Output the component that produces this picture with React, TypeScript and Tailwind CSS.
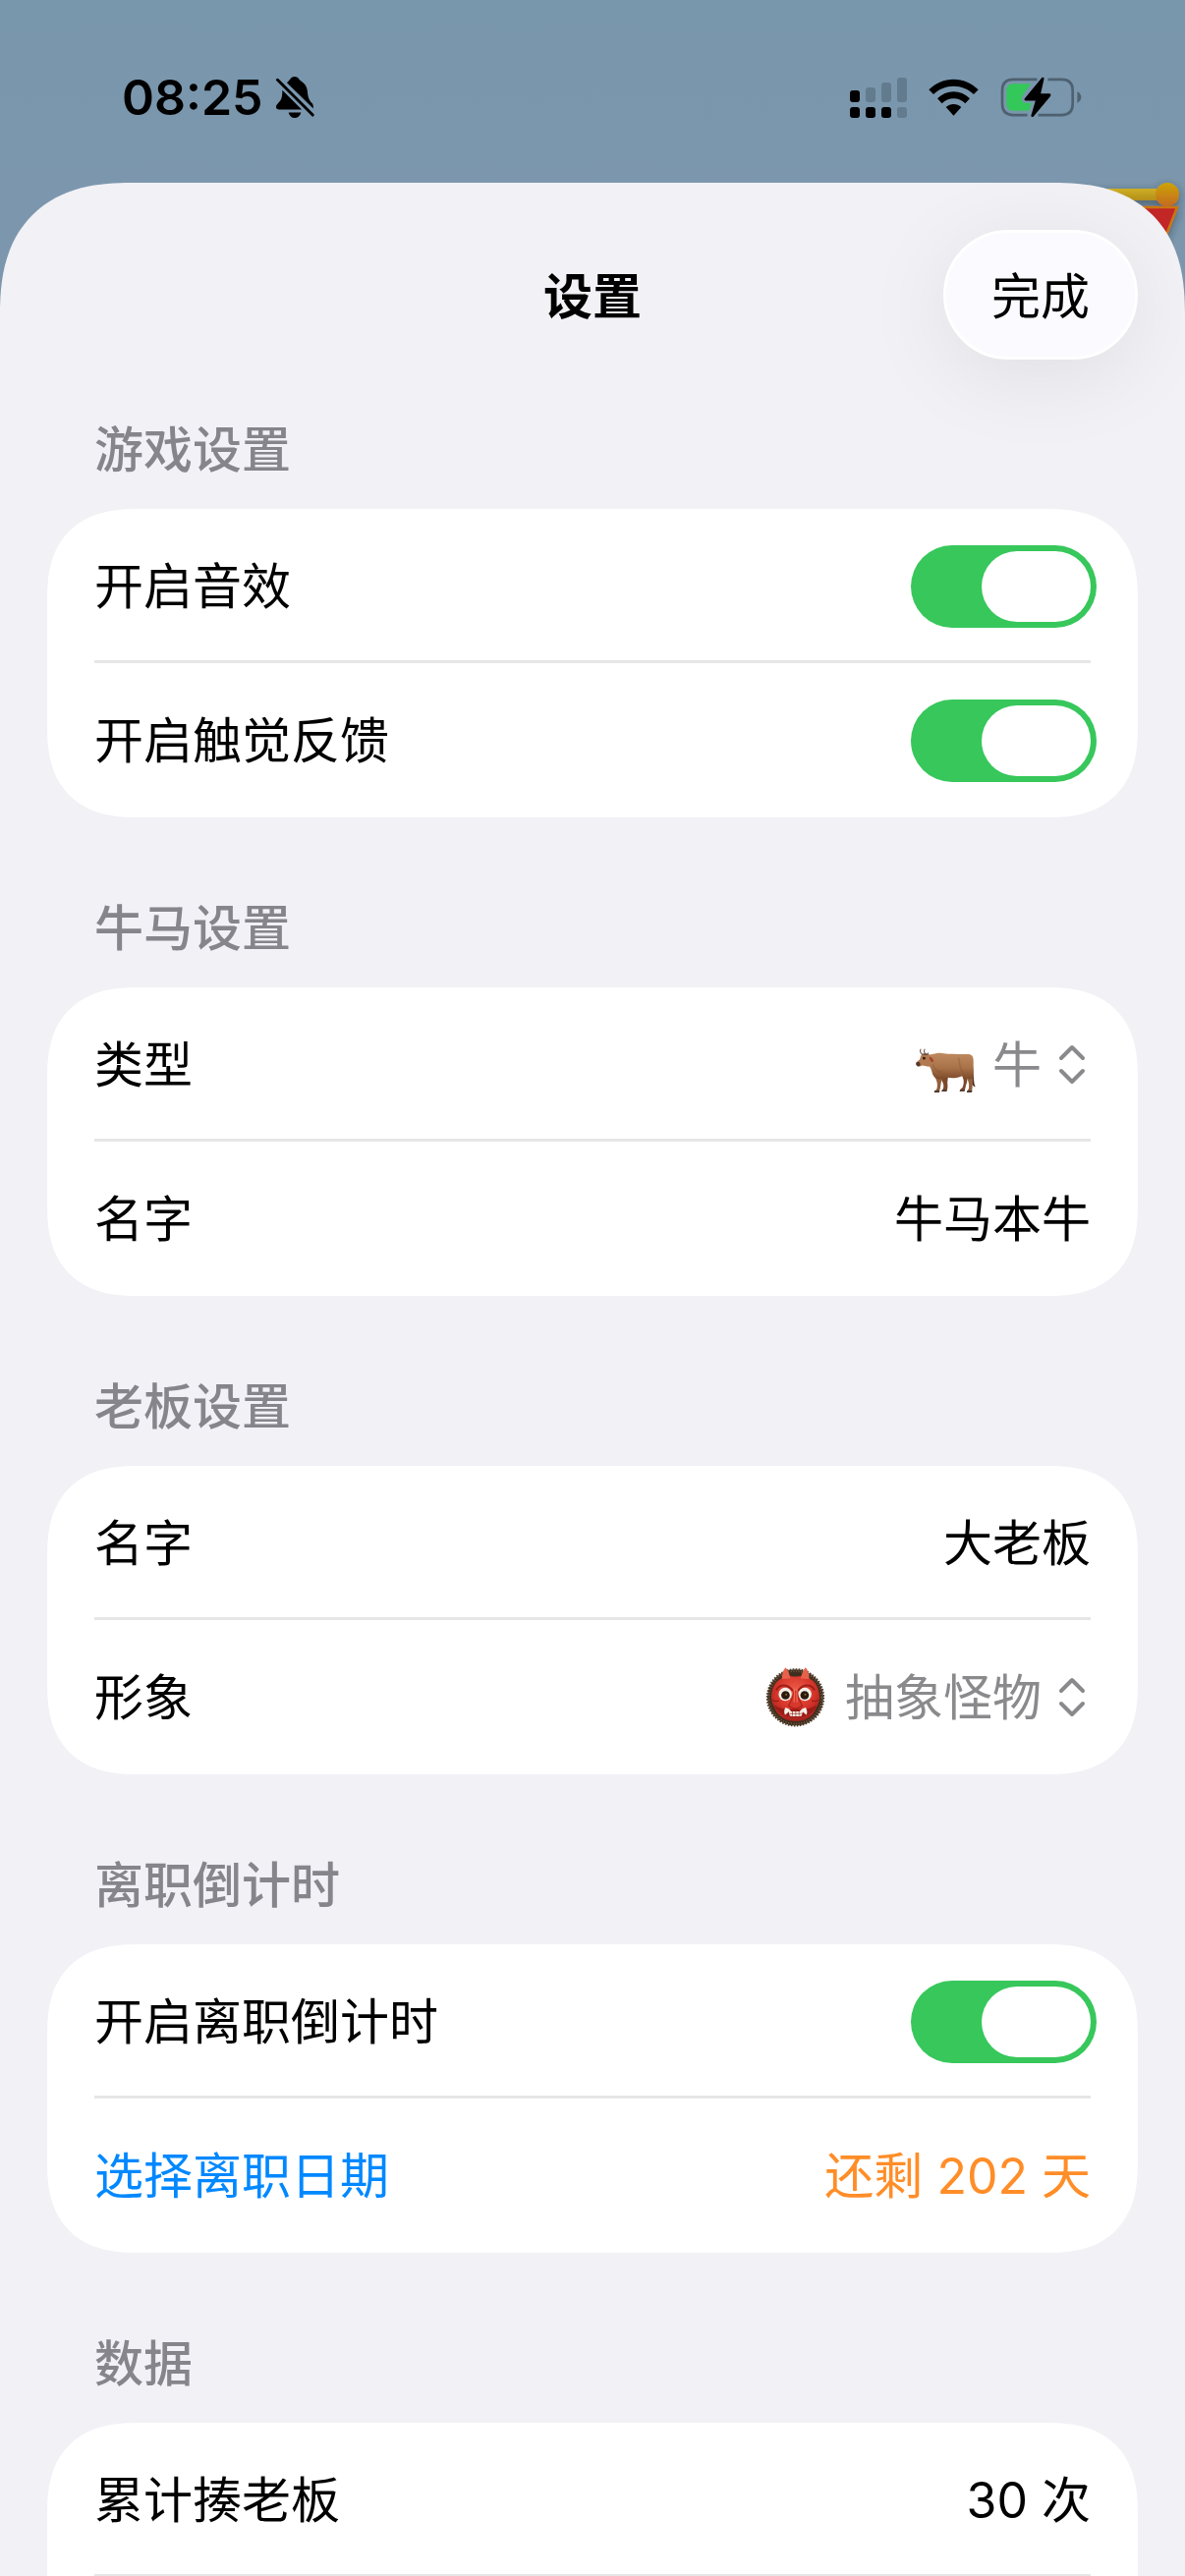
import type { ReactNode } from "react";

function BellSlash() {
  return (
    <svg viewBox="534 78 124 134" className="h-[44px] w-[41px]" aria-hidden="true">
      <path
        d="M570 100 C576 94 579 91 581 88 C584 83 589 81 594 81 C599 81 604 83 607 88 C609 91 612 94 618 98 C628 105 633 116 634 128 C635 146 641 157 648 163 C651 166 652 171 652 180 Z"
        fill="#000"
      />
      <path
        d="M556 123 L616 183 L545 183 C538 183 535 178 537 172 C539 166 545 162 550 155 C555 148 556 136 556 123 Z"
        fill="#000"
      />
      <path d="M575 192 H614 C611 202 604 209 594 209 C584 209 578 202 575 192 Z" fill="#000" />
      <path d="M541 91 L650 200" stroke="#000" strokeWidth="9" strokeLinecap="round" />
    </svg>
  );
}

function Signal() {
  return (
    <svg viewBox="75 81 174 123" className="h-[41px] w-[58px]" aria-hidden="true">
      <g fill="#000">
        <rect x="75" y="120" width="30" height="36" rx="9" />
        <rect x="75" y="171" width="30" height="33" rx="9" />
        <rect x="123" y="171" width="30" height="33" rx="9" />
        <rect x="171" y="171" width="30" height="33" rx="9" />
      </g>
      <g fill="#637b8e">
        <rect x="123" y="111" width="30" height="45" rx="9" />
        <rect x="171" y="96" width="30" height="60" rx="9" />
        <rect x="219" y="81" width="30" height="75" rx="9" />
        <rect x="219" y="171" width="30" height="33" rx="9" />
      </g>
    </svg>
  );
}

function Wifi() {
  return (
    <svg viewBox="315 85 153 114" className="h-[38px] w-[51px]" aria-hidden="true">
      <g fill="#000">
        <path d="M316 119 C337 98 363 87 391.500 87 C420 87 446 98 467 119 L453 133 C436 117 415 108 391.500 108 C368 108 347 117 330 133 Z" />
        <path d="M342 146 C356 132 373 125 391.500 125 C410 125 427 132 441 146 L427 161 C417 151 405 146 391.500 146 C378 146 366 151 356 161 Z" />
        <path d="M368 172 C375 166 383 163 391.500 163 C400 163 408 166 415 172 L391.500 198 Z" />
      </g>
    </svg>
  );
}

function Battery() {
  return (
    <svg viewBox="532 80 250 125" className="h-[42px] w-[83px]" aria-hidden="true">
      <path
        d="M645 88 H572 C550 88 538 100 538 122 V163 C538 185 550 197 572 197 H615 M678 88 H720 C742 88 754 100 754 122 V163 C754 185 742 197 720 197 H648"
        fill="none"
        stroke="#4e6170"
        strokeWidth="8"
      />
      <path d="M768 125 C776 129 780 135 780 142 C780 150 776 156 768 160 Z" fill="#4e6170" />
      <path
        d="M572 101 H626 L601 137 C595 147 598 160 612 160 H628 L620 184 H572 C559 184 551 176 551 163 V122 C551 109 559 101 572 101 Z"
        fill="#34c759"
      />
      <path
        d="M659 83 C663 80 667 82 666 87 L656 131 H682 C688 131 688 136 685 140 L634 201 C630 205 625 202 627 197 L640 153 H611 C605 153 604 149 608 145 Z"
        fill="#000"
      />
    </svg>
  );
}

function Pennant() {
  return (
    <svg
      viewBox="0 0 126 150"
      className="absolute top-[170px] right-0 h-[150px] w-[126px]"
      aria-hidden="true"
    >
      <defs>
        <linearGradient id="bar" x1="0" y1="0" x2="0" y2="1">
          <stop offset="0" stopColor="#cfae22" />
          <stop offset="1" stopColor="#b28f1c" />
        </linearGradient>
        <linearGradient id="knob" x1="0" y1="0" x2="0" y2="1">
          <stop offset="0" stopColor="#cca404" />
          <stop offset="1" stopColor="#c56a22" />
        </linearGradient>
        <filter id="soft" x="-50%" y="-50%" width="200%" height="200%">
          <feDropShadow dx="0" dy="3" stdDeviation="5" floodColor="#1e2c38" floodOpacity="0.5" />
        </filter>
      </defs>
      <g filter="url(#soft)">
        <path d="M62 41 H118 L94 102 Z" fill="#c22828" stroke="#cc750c" strokeWidth="2.500" />
        <rect x="10" y="22" width="87" height="12" fill="url(#bar)" />
        <circle cx="108" cy="28" r="12" fill="url(#knob)" />
      </g>
    </svg>
  );
}

function Ox() {
  return (
    <svg viewBox="89 40 182 182" className="h-[61px] w-[61px] overflow-visible" aria-hidden="true">
      <defs>
        <linearGradient id="hide" x1="0" y1="0" x2="0" y2="1">
          <stop offset="0" stopColor="#bf8a5f" />
          <stop offset="0.55" stopColor="#a97349" />
          <stop offset="1" stopColor="#7c4a2a" />
        </linearGradient>
        <linearGradient id="leg" x1="0" y1="0" x2="0" y2="1">
          <stop offset="0" stopColor="#9a6640" />
          <stop offset="1" stopColor="#8c5c3b" />
        </linearGradient>
      </defs>
      <path d="M268 150 C278 168 271 184 279 199 C271 197 266 188 267 178 Z" fill="#4a2c1b" />
      <path
        d="M238 165 C246 178 244 190 240 200 L232 208 V212 H246 C249 203 249 196 253 186 L256 166 Z M168 165 C178 180 186 192 181 204 L177 212 H191 C196 205 195 196 194 186 L196 168 Z"
        fill="#7b4a2c"
      />
      <path
        d="M236 160 C254 170 262 182 259 203 L254 214 H268 C271 200 270 186 272 172 V150 Z M148 158 C162 176 166 190 162 205 L155 214 H169 C174 202 173 192 176 182 L184 162 Z"
        fill="url(#leg)"
      />
      <path
        d="M155 210 H171 L169 216 H154 Z M254 210 H270 L267 216 H253 Z M178 208 H194 L191 213 H176 Z M233 207 H247 L245 212 H231 Z"
        fill="#4d3a30"
      />
      <path
        d="M128 98 C140 104 150 99 162 97 C176 94 184 99 196 99 C216 99 238 100 256 100 C268 100 273 106 273 120 C272 138 276 156 272 172 C266 179 252 174 240 165 C226 172 208 174 192 170 C180 178 164 178 154 168 C146 160 148 148 140 138 Z"
        fill="url(#hide)"
      />
      <path
        d="M117 100 C124 94 136 98 142 104 C150 116 148 130 138 138 C130 137 124 134 117 134 C110 139 102 138 100 131 C99 124 104 120 110 116 C112 110 113 104 117 100 Z"
        fill="#b27a50"
      />
      <path d="M100 124 C106 121 111 124 112 130 C112 137 103 139 100 133 C98 130 98 127 100 124 Z" fill="#59372a" />
      <path d="M139 109 C146 108 151 113 152 122 C147 126 141 120 139 109 Z" fill="#a6422c" />
      <circle cx="123" cy="112" r="4" fill="#26170f" />
      <path
        d="M119 101 C112 97 110 91 113 85 M130 101 C124 97 122 91 125 85 M122 100 C129 103 136 101 135 96"
        fill="none"
        stroke="#5d4a41"
        strokeWidth="3"
        strokeLinecap="round"
      />
      <path
        d="M150 132 C154 144 164 154 176 154 M228 112 C232 130 232 146 242 158"
        fill="none"
        stroke="#875432"
        strokeWidth="5"
        strokeLinecap="round"
        opacity="0.35"
      />
    </svg>
  );
}

function Ogre() {
  return (
    <svg viewBox="86 84 182 182" className="h-[61px] w-[61px]" aria-hidden="true">
      <defs>
        <radialGradient id="skin" cx="0.5" cy="0.35" r="0.65">
          <stop offset="0" stopColor="#f0604a" />
          <stop offset="0.6" stopColor="#d6352a" />
          <stop offset="1" stopColor="#a3201c" />
        </radialGradient>
      </defs>
      <circle cx="177" cy="176" r="85" fill="#3f2e1f" />
      <circle cx="177" cy="176" r="86" fill="none" stroke="#4d3a28" strokeWidth="5" strokeDasharray="5 4" />
      <circle cx="177" cy="176" r="80" fill="none" stroke="#755c42" strokeWidth="5" strokeDasharray="3 5" />
      <path
        d="M140 116 C152 107 162 112 177 112 C192 112 202 107 214 116 C238 124 250 148 250 176 C250 188 246 198 240 208 C230 236 206 248 178 248 C150 248 124 236 114 208 C108 198 104 188 104 176 C104 148 116 124 140 116 Z"
        fill="url(#skin)"
      />
      <path
        d="M136 120 C136 106 140 92 147 85 C154 92 159 104 162 118 Z M219 120 C219 106 215 92 208 85 C201 92 196 104 193 118 Z"
        fill="#e9614a"
      />
      <path
        d="M120 152 C128 136 152 134 168 154 M186 154 C202 134 226 136 234 152"
        fill="none"
        stroke="#9c1d19"
        strokeWidth="6"
        strokeLinecap="round"
      />
      <circle cx="146" cy="166" r="20" fill="#f3eee6" />
      <circle cx="206" cy="166" r="20" fill="#f3eee6" />
      <circle cx="147" cy="169" r="13" fill="#2b1a0c" />
      <circle cx="205" cy="169" r="13" fill="#2b1a0c" />
      <circle cx="149" cy="167" r="3" fill="#8a6a34" />
      <circle cx="207" cy="167" r="3" fill="#8a6a34" />
      <path
        d="M112 198 C130 212 154 212 177 210 C200 212 224 212 242 198 C236 222 210 236 178 236 C146 236 120 222 112 198 Z"
        fill="#9a1c17"
      />
      <path
        d="M172 158 C170 178 162 190 156 200 C164 210 172 204 177 211 C182 204 192 210 198 200 C192 190 184 178 182 158 Z"
        fill="#d8382c"
        stroke="#a32019"
        strokeWidth="3"
      />
      <path d="M174 150 L173 190 M181 150 L182 190" stroke="#f4745c" strokeWidth="3" strokeLinecap="round" />
      <path
        d="M147 206 L158 211 L164 218 H190 L197 211 L208 206 C213 214 214 222 210 229 L199 219 L196 232 C184 234 170 234 160 232 L157 219 L146 229 C142 222 142 214 147 206 Z"
        fill="#f7f2ea"
      />
      <path d="M168 218 V232 M178 218 V233 M188 218 V232 M160 225 H196" stroke="#8f2a22" strokeWidth="2" />
      <path
        d="M108 184 C114 188 120 188 126 186 M246 184 C240 188 234 188 228 186"
        fill="none"
        stroke="#9c1d19"
        strokeWidth="4"
        strokeLinecap="round"
      />
    </svg>
  );
}

function UpDown() {
  return (
    <svg viewBox="0 0 38 44" className="h-[44px] w-[38px] shrink-0" aria-hidden="true">
      <path
        d="M8 15 L19 4 L30 15 M8 28 L19 39 L30 28"
        fill="none"
        stroke="#8a8a8d"
        strokeWidth="4"
        strokeLinecap="round"
        strokeLinejoin="round"
      />
    </svg>
  );
}

function Section({ title, children }: { title: string; children: ReactNode }) {
  return (
    <section>
      <h2 className="mb-6 px-12 leading-[72px] font-medium text-[#86858b]">{title}</h2>
      <div className="rounded-[92px] bg-white px-12 [corner-shape:superellipse(1.3)]">{children}</div>
    </section>
  );
}

function Row({ children }: { children: ReactNode }) {
  return (
    <div className="relative flex h-[157px] items-center justify-between gap-6 not-last:after:absolute not-last:after:inset-x-0 not-last:after:bottom-0 not-last:after:h-[3px] not-last:after:bg-[#e6e6e6]">
      {children}
    </div>
  );
}

function ToggleRow({ id, label }: { id: string; label: string }) {
  return (
    <Row>
      <label htmlFor={id}>{label}</label>
      <input
        id={id}
        type="checkbox"
        role="switch"
        defaultChecked
        className="-mr-1.5 flex h-[84px] w-[189px] shrink-0 appearance-none items-center rounded-full bg-[#e4e4e6] p-1.5 before:h-[72px] before:w-[111px] before:rounded-full before:bg-white checked:justify-end checked:bg-[#37c75b]"
      />
    </Row>
  );
}

function InputRow({ id, label, value }: { id: string; label: string; value: string }) {
  return (
    <Row>
      <label htmlFor={id} className="shrink-0">
        {label}
      </label>
      <input id={id} type="text" defaultValue={value} className="min-w-0 flex-1 bg-transparent text-right outline-none" />
    </Row>
  );
}

function SelectRow({ id, label, value, icon }: { id: string; label: string; value: string; icon: ReactNode }) {
  return (
    <Row>
      <label htmlFor={id}>{label}</label>
      <div className="flex items-center text-[#8a8a8d]">
        {icon}
        <select id={id} defaultValue={value} className="mr-3 ml-5 appearance-none bg-transparent outline-none">
          <option value={value}>{value}</option>
        </select>
        <UpDown />
      </div>
    </Row>
  );
}

export default function App() {
  return (
    <div className="relative flex h-screen flex-col overflow-hidden bg-linear-to-b from-[#7896ac] to-[#7c97ad] to-[186px] font-['Inter','Noto_Sans_CJK_SC',sans-serif] text-[50px] leading-[72px] text-black">
      <Pennant />
      <header className="flex h-[186px] shrink-0 items-center justify-between pt-3 pr-[105px] pl-[124px]">
        <div className="flex items-center gap-3">
          <time className="font-semibold">08:25</time>
          <BellSlash />
        </div>
        <div className="flex items-center gap-[22px]">
          <Signal />
          <Wifi />
          <Battery />
        </div>
      </header>

      <main className="relative min-h-0 flex-1 overflow-hidden rounded-t-[134px] bg-[#f1f1f6] px-12 pt-12 [corner-shape:superellipse(1.3)]">
        <div className="grid grid-cols-[1fr_auto_1fr] items-center">
          <h1 className="col-start-2 pt-1 font-bold">设置</h1>
          <button
            type="button"
            className="h-[132px] w-[198px] justify-self-end rounded-full border-3 border-white bg-[#fafaff] pt-1 shadow-[0_16px_90px_rgba(0,0,0,0.08)]"
          >
            完成
          </button>
        </div>

        <div className="mt-14 flex flex-col gap-[77px]">
          <Section title="游戏设置">
            <ToggleRow id="sound" label="开启音效" />
            <ToggleRow id="haptics" label="开启触觉反馈" />
          </Section>
          <Section title="牛马设置">
            <SelectRow id="kind" label="类型" value="牛" icon={<Ox />} />
            <InputRow id="worker-name" label="名字" value="牛马本牛" />
          </Section>
          <Section title="老板设置">
            <InputRow id="boss-name" label="名字" value="大老板" />
            <SelectRow id="boss-look" label="形象" value="抽象怪物" icon={<Ogre />} />
          </Section>
          <Section title="离职倒计时">
            <ToggleRow id="countdown" label="开启离职倒计时" />
            <Row>
              <button type="button" className="text-[#0088ff]">
                选择离职日期
              </button>
              <span className="text-[#ff8d28]">还剩 202 天</span>
            </Row>
          </Section>
          <Section title="数据">
            <Row>
              <span>累计揍老板</span>
              <span>30 次</span>
            </Row>
            <Row>{null}</Row>
          </Section>
        </div>
      </main>
    </div>
  );
}
